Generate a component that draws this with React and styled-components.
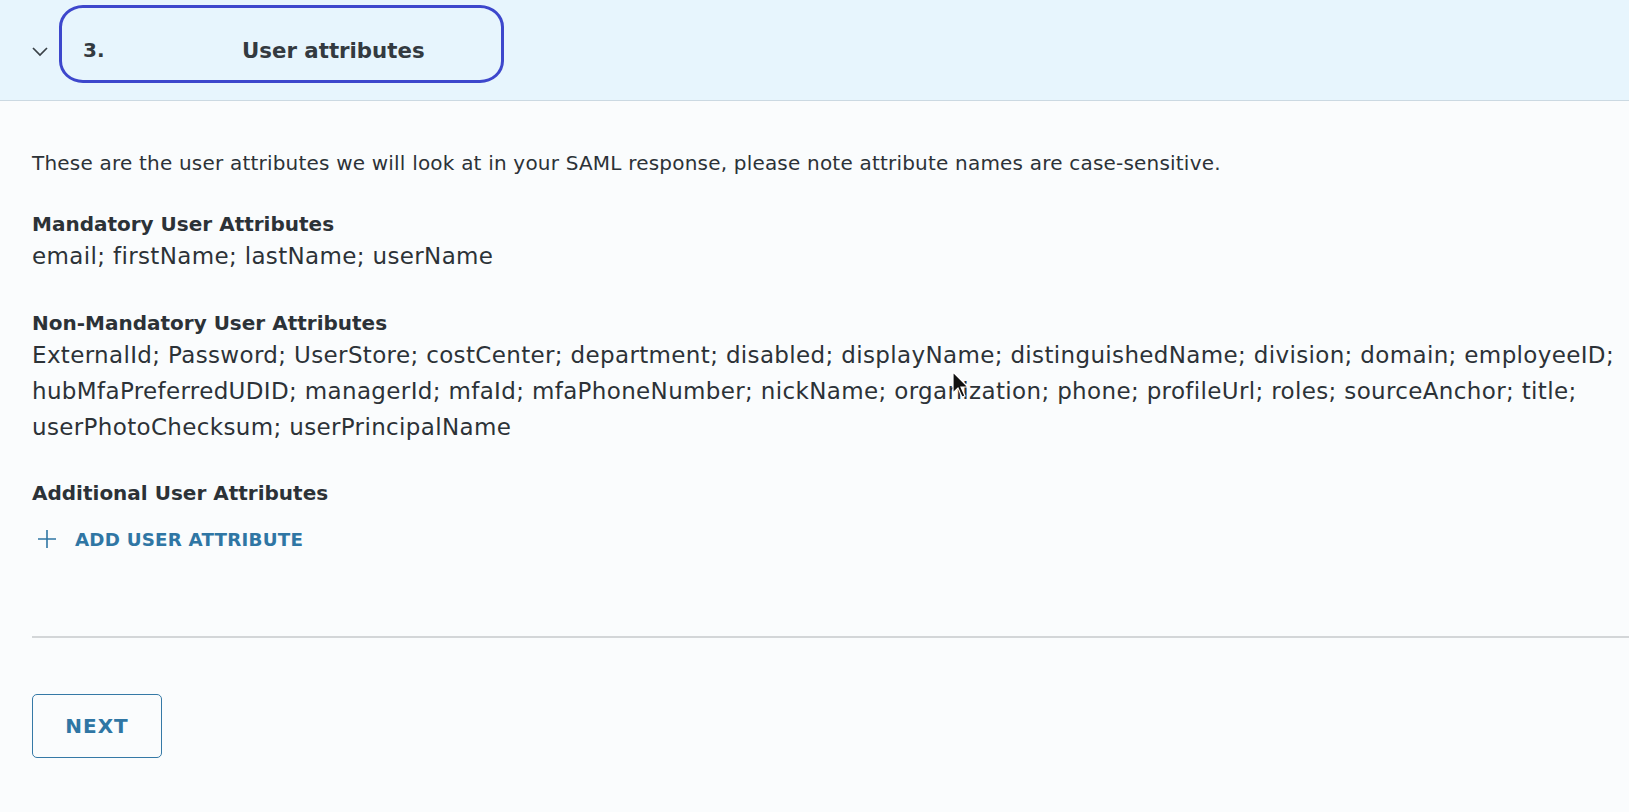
import React from 'react';
import styled, { createGlobalStyle } from 'styled-components';

const Global = createGlobalStyle`
  body {
    margin: 0;
    background: #fafcfd;
    font-family: "DejaVu Sans", "Liberation Sans", sans-serif;
    color: #2c3237;
  }
`;

const Page = styled.div`
  position: relative;
  width: 1629px;
  height: 812px;
  overflow: hidden;
  background: #fafcfd;
`;

const Header = styled.div`
  position: relative;
  height: 101px;
  background: #e7f5fd;
  border-bottom: 1px solid #cbd9e2;
  display: flex;
  align-items: center;
  padding-left: 31px;
  box-sizing: border-box;
`;

const Chevron = styled.svg`
  width: 18px;
  height: 18px;
  margin-top: 2px;
`;

const StepNo = styled.span`
  font-size: 20px;
  font-weight: 700;
  color: #333a40;
  margin-left: 34px;
  width: 159px;
`;

const StepTitle = styled.span`
  font-size: 21.3px;
  font-weight: 700;
  color: #333a40;
`;

const Annotation = styled.div`
  position: absolute;
  left: 59px;
  top: 5px;
  width: 445px;
  height: 78px;
  border: 3px solid #3d47cc;
  border-radius: 24px / 22px;
  box-sizing: border-box;
  pointer-events: none;
`;

const Body = styled.div`
  padding: 0 0 0 32px;
`;

const Intro = styled.p`
  margin: 49px 0 0;
  font-size: 20px;
  letter-spacing: 0.2px;
  line-height: 26px;
  color: #2c3237;
  white-space: nowrap;
`;

const Section = styled.div`
  margin-top: ${(p) => p.$gap}px;
`;

const Label = styled.div`
  font-size: 20px;
  font-weight: 700;
  line-height: 28px;
  color: #2c3237;
`;

const Values = styled.div`
  font-size: 23px;
  letter-spacing: 0.35px;
  line-height: 36px;
  color: #2c3237;
  white-space: nowrap;
`;

const AddLink = styled.button`
  display: flex;
  align-items: center;
  gap: 18px;
  height: 24px;
  margin-top: 20px;
  padding: 0 0 0 5px;
  border: none;
  background: none;
  font-family: inherit;
  font-size: 18.3px;
  font-weight: 700;
  letter-spacing: 0.2px;
  color: #2f76a4;
  cursor: pointer;
`;

const Divider = styled.hr`
  margin: 85px 0 0;
  border: none;
  border-top: 2px solid #d3d6d8;
`;

const NextButton = styled.button`
  margin-top: 56px;
  width: 130px;
  height: 64px;
  border: 1.5px solid #3579a6;
  border-radius: 5px;
  background: #fafcfd;
  font-family: inherit;
  font-size: 20px;
  font-weight: 700;
  letter-spacing: 1px;
  color: #2f76a4;
`;

const Cursor = styled.svg`
  position: absolute;
  left: 952px;
  top: 371px;
  width: 19px;
  height: 28px;
`;

export default function App() {
  return (
    <Page>
      <Global />
      <Header>
        <Chevron viewBox="0 0 18 18">
          <path d="M2 6 L9 13 L16 6" fill="none" stroke="#3a4147" strokeWidth="1.7" />
        </Chevron>
        <StepNo>3.</StepNo>
        <StepTitle>User attributes</StepTitle>
        <Annotation />
      </Header>
      <Body>
        <Intro>
          These are the user attributes we will look at in your SAML response, please note attribute names are case-sensitive.
        </Intro>
        <Section $gap={34}>
          <Label>Mandatory User Attributes</Label>
          <Values>email; firstName; lastName; userName</Values>
        </Section>
        <Section $gap={35}>
          <Label>Non-Mandatory User Attributes</Label>
          <Values>ExternalId; Password; UserStore; costCenter; department; disabled; displayName; distinguishedName; division; domain; employeeID;</Values>
          <Values>hubMfaPreferredUDID; managerId; mfaId; mfaPhoneNumber; nickName; organization; phone; profileUrl; roles; sourceAnchor; title;</Values>
          <Values>userPhotoChecksum; userPrincipalName</Values>
        </Section>
        <Section $gap={34}>
          <Label>Additional User Attributes</Label>
          <AddLink>
            <svg width="20" height="20" viewBox="0 0 20 20">
              <path d="M10 1 V19 M1 10 H19" stroke="#2f76a4" strokeWidth="1.6" />
            </svg>
            ADD USER ATTRIBUTE
          </AddLink>
        </Section>
        <Divider />
        <NextButton>NEXT</NextButton>
      </Body>
      <Cursor viewBox="0 0 19 28">
        <path d="M1 1 L1 22 L6 17 L10 26 L13 25 L9 16 L16 16 Z" fill="#111" stroke="#fff" strokeWidth="1.2" />
      </Cursor>
    </Page>
  );
}
